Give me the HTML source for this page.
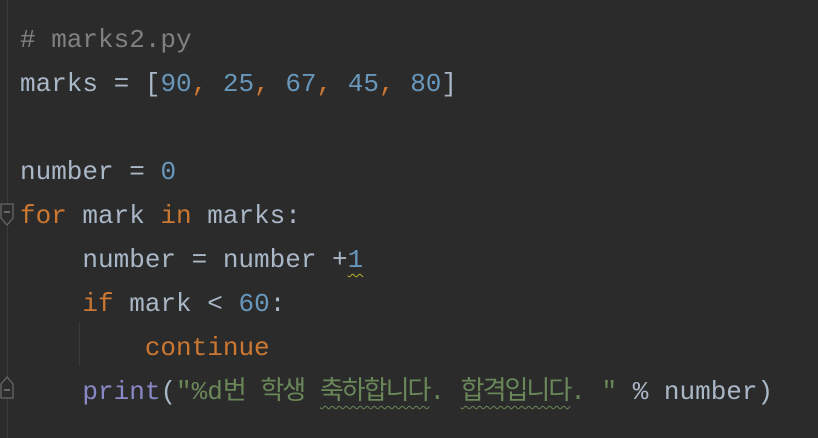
<!DOCTYPE html>
<html><head><meta charset="utf-8"><style>
html,body{margin:0;padding:0;background:#2b2b2b;width:818px;height:438px;overflow:hidden}
.code{position:absolute;left:20px;top:18px;font-family:"Liberation Mono","Noto Sans CJK KR",monospace;font-size:26px;color:#a9b7c6}
.l{height:44px;line-height:44px;white-space:pre}
.k{color:#cc7832}.n{color:#6897bb}.s{color:#6a8759}.c{color:#808080}.p{color:#8888c6}
.ko{letter-spacing:-2px}
.w{text-decoration:underline wavy #6a8759;text-decoration-thickness:1px;text-underline-offset:6px}
.wy{text-decoration:underline wavy #bbb529;text-decoration-thickness:1px;text-underline-offset:6px}
.gut{position:absolute;left:7px;top:0;width:1px;height:438px;background:#3a3a3a}
.guide{position:absolute;left:79px;top:322px;width:1px;height:44px;background:#3c3c3c}
</style></head><body>
<div class="gut"></div><div class="guide"></div>
<svg style="position:absolute;left:0;top:203px" width="16" height="26"><path d="M1 1H13V15L7 22L1 15Z" fill="#2b2b2b" stroke="#666" stroke-width="1.3"/><path d="M4 9H10" stroke="#888" stroke-width="1.3"/></svg>
<svg style="position:absolute;left:0;top:374px" width="16" height="26"><path d="M1 24H13V10L7 3L1 10Z" fill="#2b2b2b" stroke="#666" stroke-width="1.3"/><path d="M4 16H10" stroke="#888" stroke-width="1.3"/></svg>
<div class="code"><div class="l"><span class="c"># marks2.py</span></div><div class="l">marks = [<span class="n">90</span><span class="k">, </span><span class="n">25</span><span class="k">, </span><span class="n">67</span><span class="k">, </span><span class="n">45</span><span class="k">, </span><span class="n">80</span>]</div><div class="l"> </div><div class="l">number = <span class="n">0</span></div><div class="l"><span class="k">for</span> mark <span class="k">in</span> marks:</div><div class="l">    number = number +<span class="n wy">1</span></div><div class="l">    <span class="k">if</span> mark &lt; <span class="n">60</span>:</div><div class="l">        <span class="k">continue</span></div><div class="l">    <span class="p">print</span>(<span class="s">"%d<span class="ko">번</span> <span class="ko">학생</span> <span class="w ko">축하합니다</span>. <span class="w ko">합격입니다</span>. "</span> % number)</div></div>
</body></html>
